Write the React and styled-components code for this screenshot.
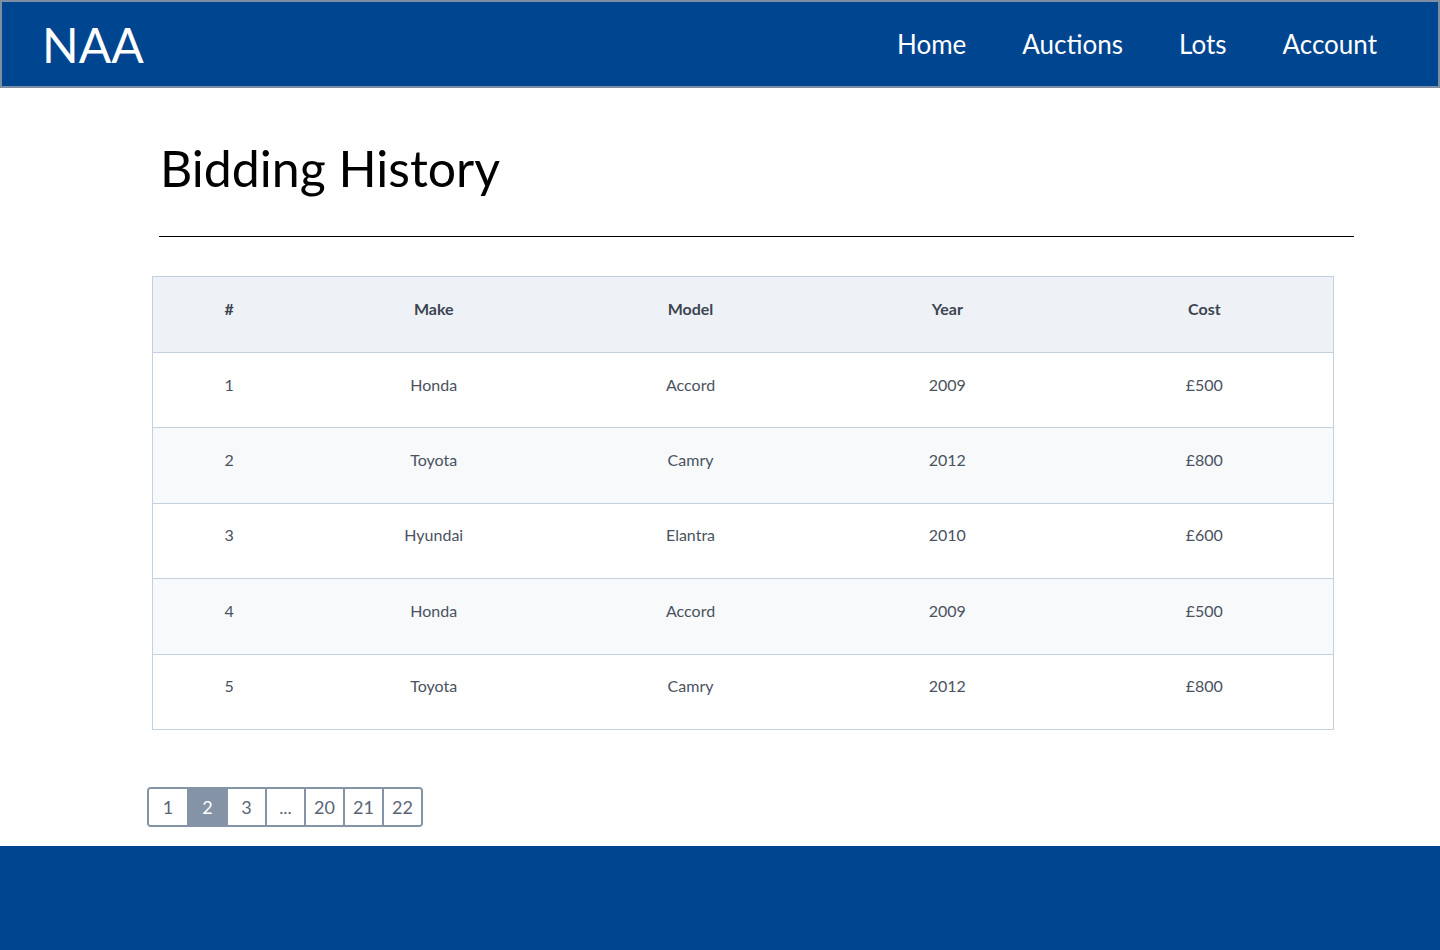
import styled, { createGlobalStyle } from 'styled-components';

const GlobalStyle = createGlobalStyle`
    body {
        margin: 0;
        font-family: Lato, "Liberation Sans", sans-serif;
        background: #ffffff;
    }
`

const Header = styled.header`
    display: flex;
    align-items: center;
    justify-content: space-between;
    height: 84px;
    background: #004590;
    border: 2px solid #7f8ea3;
    padding: 0 61px 0 40px;
    .logo {
        color: #ffffff;
        font-size: 48px;
        line-height: 1;
        margin-top: 2px;
    }
`

const Nav = styled.nav`
    display: flex;
    gap: 56px;
    a {
        color: #ffffff;
        font-size: 26px;
        text-decoration: none;
    }
`

const Main = styled.main`
    padding: 50px 86px 19px 152px;
    h1 {
        font-size: 50px;
        font-weight: 400;
        color: #000000;
        margin: 0 0 0 8px;
        line-height: 60px;
    }
    hr {
        margin: 38px 0 39px 7px;
        border: none;
        border-top: 1px solid #000000;
    }
`

const Table = styled.table`
    width: 1182px;
    border-collapse: collapse;
    th, td {
        text-align: center;
        font-size: 16px;
        padding: 0 0 12px 0;
    }
    th {
        background: #eef2f7;
        color: #3d4552;
        font-weight: 700;
        border-top: 1px solid #c3d0e0;
        border-bottom: 1px solid #c3d0e0;
        height: 63px;
    }
    th:first-child { border-left: 1px solid #c3d0e0; }
    th:last-child { border-right: 1px solid #c3d0e0; }
    td {
        color: #4a5260;
        height: 62.4px;
        border-top: 1px solid #c3d0e0;
        border-bottom: 1px solid #c3d0e0;
    }
    td:first-child { border-left: 1px solid #c3d0e0; }
    td:last-child { border-right: 1px solid #c3d0e0; }
    tbody tr:nth-child(even) td { background: #f7f9fb; }
`

const Col = styled.col`
    width: ${p => p.$w}px;
`

const Pager = styled.div`
    display: inline-flex;
    margin: 57px 0 0 -5px;
    border: 2px solid #8593a7;
    border-radius: 4px;
    overflow: hidden;
`

const PageButton = styled.button`
    box-sizing: border-box;
    width: ${p => p.$first ? 38 : 39}px;
    height: 36px;
    border: none;
    border-left: ${p => p.$first ? 'none' : '2px solid #8593a7'};
    background: ${p => p.$active ? '#8593a7' : '#ffffff'};
    color: ${p => p.$active ? '#ffffff' : '#5a6575'};
    font-family: Lato, "Liberation Sans", sans-serif;
    font-size: 18px;
    padding: 0;
    cursor: pointer;
`

const Footer = styled.footer`
    height: 104px;
    background: #004590;
`

const bids = [
    { make: 'Honda', model: 'Accord', year: 2009, cost: '£500' },
    { make: 'Toyota', model: 'Camry', year: 2012, cost: '£800' },
    { make: 'Hyundai', model: 'Elantra', year: 2010, cost: '£600' },
    { make: 'Honda', model: 'Accord', year: 2009, cost: '£500' },
    { make: 'Toyota', model: 'Camry', year: 2012, cost: '£800' },
]

const columns = [
    { label: '#', width: 153 },
    { label: 'Make', width: 257 },
    { label: 'Model', width: 257 },
    { label: 'Year', width: 257 },
    { label: 'Cost', width: 258 },
]

const pages = ['1', '2', '3', '...', '20', '21', '22']

const App = () => {
    return (
        <>
            <GlobalStyle />
            <Header>
                <span className='logo'>NAA</span>
                <Nav>
                    <a href='#'>Home</a>
                    <a href='#'>Auctions</a>
                    <a href='#'>Lots</a>
                    <a href='#'>Account</a>
                </Nav>
            </Header>
            <Main>
                <h1>Bidding History</h1>
                <hr />
                <Table>
                    <colgroup>
                        {columns.map(c => <Col key={c.label} $w={c.width} />)}
                    </colgroup>
                    <thead>
                        <tr>
                            {columns.map(c => <th key={c.label}>{c.label}</th>)}
                        </tr>
                    </thead>
                    <tbody>
                        {bids.map((b, i) => (
                            <tr key={i}>
                                <td>{i + 1}</td>
                                <td>{b.make}</td>
                                <td>{b.model}</td>
                                <td>{b.year}</td>
                                <td>{b.cost}</td>
                            </tr>
                        ))}
                    </tbody>
                </Table>
                <Pager>
                    {pages.map((p, i) => (
                        <PageButton key={i} $first={i === 0} $active={p === '2'}>{p}</PageButton>
                    ))}
                </Pager>
            </Main>
            <Footer />
        </>
    )
}

export default App;
